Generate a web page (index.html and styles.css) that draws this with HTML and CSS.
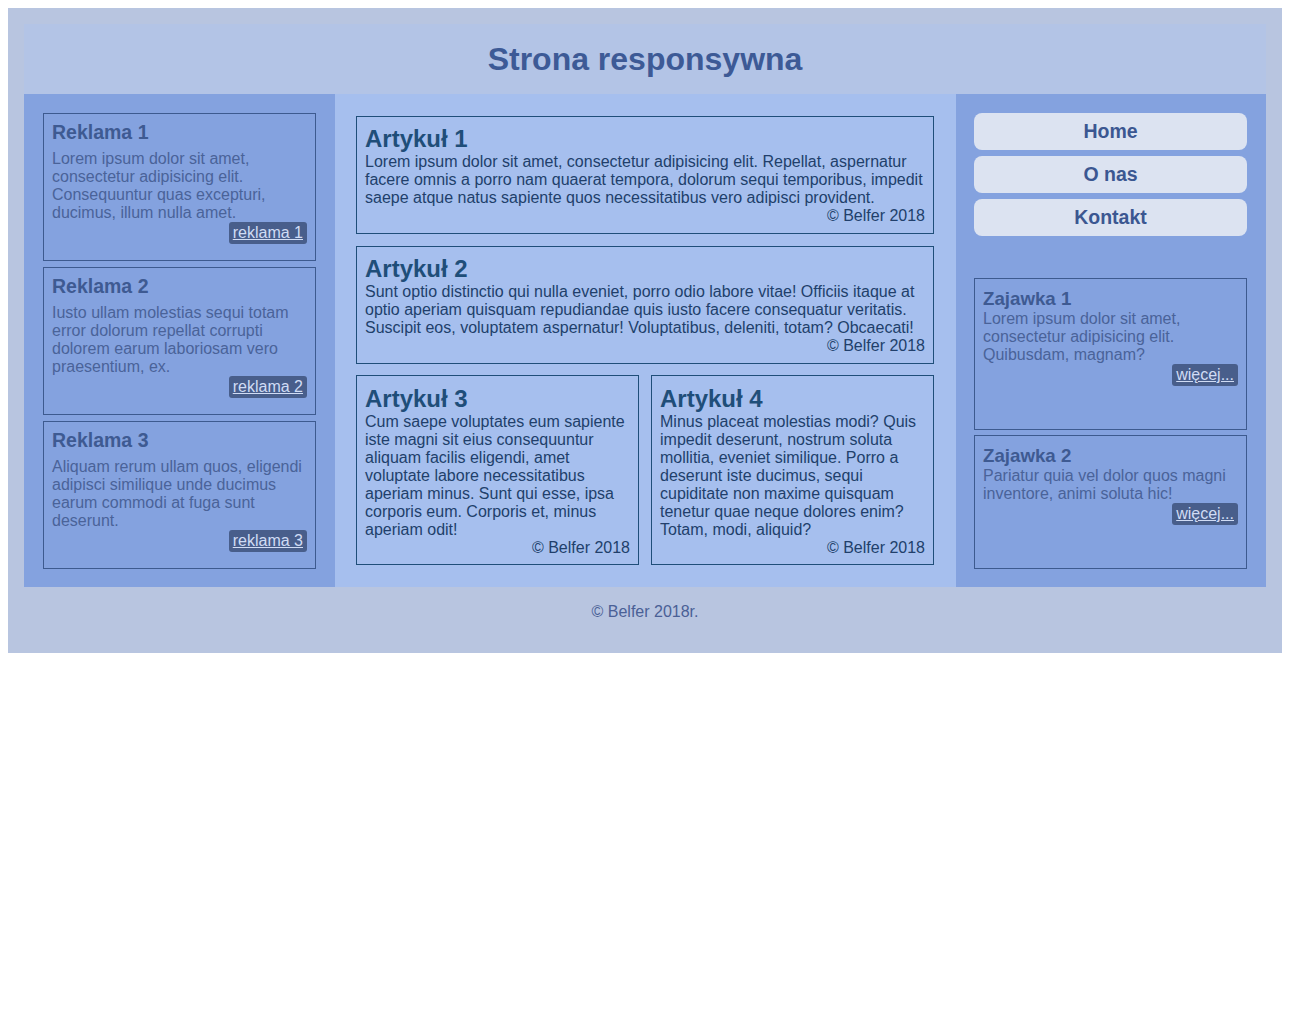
FILE: index.html
```html
<!DOCTYPE html>
<html lang="pl">
<head>
<meta charset="utf-8">
<title>Strona responsywna</title>
<link rel="stylesheet" href="styles.css">
</head>
<body>
<div class="page">
  <header class="top">
    <h1 class="top-title">Strona responsywna</h1>
  </header>
  <div class="main">
    <aside class="ads">
      <div class="ad">
        <h2 class="ad-title">Reklama 1</h2>
        <p class="ad-text">Lorem ipsum dolor sit amet, consectetur adipisicing elit. Consequuntur quas excepturi, ducimus, illum nulla amet.</p>
        <div class="link-row"><a class="pill" href="#">reklama 1</a></div>
      </div>
      <div class="ad">
        <h2 class="ad-title">Reklama 2</h2>
        <p class="ad-text">Iusto ullam molestias sequi totam error dolorum repellat corrupti dolorem earum laboriosam vero praesentium, ex.</p>
        <div class="link-row"><a class="pill" href="#">reklama 2</a></div>
      </div>
      <div class="ad">
        <h2 class="ad-title">Reklama 3</h2>
        <p class="ad-text">Aliquam rerum ullam quos, eligendi adipisci similique unde ducimus earum commodi at fuga sunt deserunt.</p>
        <div class="link-row"><a class="pill" href="#">reklama 3</a></div>
      </div>
    </aside>
    <section class="articles">
      <article class="art">
        <h2 class="art-title">Artykuł 1</h2>
        <p class="art-text">Lorem ipsum dolor sit amet, consectetur adipisicing elit. Repellat, aspernatur facere omnis a porro nam quaerat tempora, dolorum sequi temporibus, impedit saepe atque natus sapiente quos necessitatibus vero adipisci provident.</p>
        <p class="art-foot">© Belfer 2018</p>
      </article>
      <article class="art">
        <h2 class="art-title">Artykuł 2</h2>
        <p class="art-text">Sunt optio distinctio qui nulla eveniet, porro odio labore vitae! Officiis itaque at optio aperiam quisquam repudiandae quis iusto facere consequatur veritatis. Suscipit eos, voluptatem aspernatur! Voluptatibus, deleniti, totam? Obcaecati!</p>
        <p class="art-foot">© Belfer 2018</p>
      </article>
      <div class="pair">
        <article class="art">
          <h2 class="art-title">Artykuł 3</h2>
          <p class="art-text">Cum saepe voluptates eum sapiente iste magni sit eius consequuntur aliquam facilis eligendi, amet voluptate labore necessitatibus aperiam minus. Sunt qui esse, ipsa corporis eum. Corporis et, minus aperiam odit!</p>
          <p class="art-foot">© Belfer 2018</p>
        </article>
        <article class="art">
          <h2 class="art-title">Artykuł 4</h2>
          <p class="art-text">Minus placeat molestias modi? Quis impedit deserunt, nostrum soluta mollitia, eveniet similique. Porro a deserunt iste ducimus, sequi cupiditate non maxime quisquam tenetur quae neque dolores enim? Totam, modi, aliquid?</p>
          <p class="art-foot">© Belfer 2018</p>
        </article>
      </div>
    </section>
    <aside class="side">
      <nav class="menu">
        <a class="menu-item" href="#">Home</a>
        <a class="menu-item" href="#">O nas</a>
        <a class="menu-item" href="#">Kontakt</a>
      </nav>
      <div class="teasers">
        <div class="teaser">
          <h3 class="teaser-title">Zajawka 1</h3>
          <p class="ad-text">Lorem ipsum dolor sit amet, consectetur adipisicing elit. Quibusdam, magnam?</p>
          <div class="link-row"><a class="pill" href="#">więcej...</a></div>
        </div>
        <div class="teaser teaser-last">
          <h3 class="teaser-title">Zajawka 2</h3>
          <p class="ad-text">Pariatur quia vel dolor quos magni inventore, animi soluta hic!</p>
          <div class="link-row"><a class="pill" href="#">więcej...</a></div>
        </div>
      </div>
    </aside>
  </div>
  <footer class="foot">© Belfer 2018r.</footer>
</div>
</body>
</html>
```

FILE: styles.css
```css
body {
  margin: 8px;
  background: #ffffff;
  font-family: "Liberation Sans", Arial, sans-serif;
  font-size: 16px;
}

.page {
  background: #b8c5e0;
  padding: 16px;
}

.top {
  background: #b3c4e6;
  padding: 16.5px 0;
  text-align: center;
}

.top-title {
  margin: 0;
  font-size: 32px;
  font-weight: bold;
  line-height: normal;
  color: #3d5a96;
}

.main {
  display: grid;
  grid-template-columns: 1fr 2fr 1fr;
}

/* left column */
.ads {
  background: #84a2df;
  padding: 19px 18.5px 18px 19px;
  display: flex;
  flex-direction: column;
  gap: 5.5px;
}

.ad {
  flex: 1 1 0;
  border: 1px solid #3d5a8f;
  padding: 7px 8px;
}

.ad-title {
  margin: 0 0 6px;
  font-size: 19.5px;
  line-height: 23px;
  color: #3e5a92;
}

.ad-text {
  margin: 0;
  color: #4a6399;
  line-height: normal;
}

.link-row {
  text-align: right;
}

.pill {
  display: inline-block;
  background: #485e8b;
  color: #d0dcf5;
  padding: 2px 4px;
  border-radius: 3px;
  line-height: normal;
}

/* middle column */
.articles {
  background: #a6bfee;
  padding: 22px 21.5px;
  display: flex;
  flex-direction: column;
  gap: 11.5px;
}

.pair {
  display: grid;
  grid-template-columns: 1fr 1fr;
  gap: 12px;
}

.art {
  border: 1px solid #1f4e79;
  padding: 8px;
  display: flex;
  flex-direction: column;
}

.pair .art {
  padding: 9px 8px 7px;
}

.art-title {
  margin: 0;
  font-size: 24px;
  line-height: normal;
  color: #1f4e79;
}

.art-text {
  margin: 0;
  color: #213f6b;
  line-height: normal;
}

.art-foot {
  margin: auto 0 0;
  text-align: right;
  color: #213f6b;
  line-height: normal;
}

/* right column */
.side {
  background: #84a2df;
  padding: 19px 19px 18px 18.5px;
  display: flex;
  flex-direction: column;
}

.menu {
  display: flex;
  flex-direction: column;
  gap: 6px;
  margin-bottom: 42px;
}

.menu-item {
  display: block;
  background: #dce3f1;
  border-radius: 8px;
  padding: 7px 0;
  text-align: center;
  font-size: 19.5px;
  font-weight: bold;
  line-height: 23px;
  color: #3b5791;
  text-decoration: none;
}

.teasers {
  flex: 1;
  display: flex;
  flex-direction: column;
  gap: 5px;
}

.teaser {
  border: 1px solid #3d5a8f;
  padding: 9px 8px 43px;
}

.teaser-last {
  flex: 1;
  padding-bottom: 40px;
}

.teaser-title {
  margin: 0;
  font-size: 18.72px;
  line-height: normal;
  color: #3e5a92;
}

.foot {
  padding: 16px 0;
  text-align: center;
  color: #4a6096;
  line-height: normal;
}
```
